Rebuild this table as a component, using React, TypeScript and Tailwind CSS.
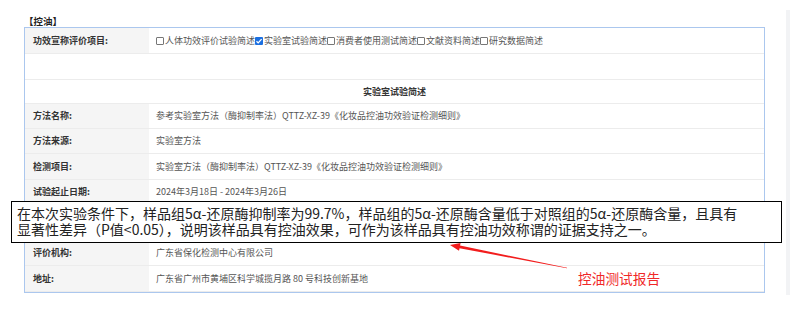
import type { ReactNode } from "react";

const FONT = '"Noto Sans CJK SC", "Noto Sans", sans-serif';

function Box({ checked = false }: { checked?: boolean }) {
  if (checked) {
    return (
      <span className="mr-[1px] inline-flex h-[8px] w-[8px] items-center justify-center rounded-[1px] bg-[#1b6fe0]">
        <svg viewBox="0 0 8 8" className="h-[8px] w-[8px]">
          <path d="M1.5 4.2 L3.2 5.9 L6.6 2.1" fill="none" stroke="#fff" strokeWidth="1.3" />
        </svg>
      </span>
    );
  }
  return <span className="mr-[1px] inline-block h-[8px] w-[8px] rounded-[1px] border border-[#777] bg-white" />;
}

function Row({ label, h, children }: { label?: string; h: string; children?: ReactNode }) {
  return (
    <div className={`flex border-b border-[#ececec] ${h}`}>
      <div className="flex w-[124px] shrink-0 items-center bg-[#f5f5f5] pl-[8px] font-bold text-[#333]">
        {label}
      </div>
      <div className="flex items-center pl-[7px] text-[#555]">{children}</div>
    </div>
  );
}

const items = [
  { text: "人体功效评价试验简述", checked: false },
  { text: "实验室试验简述", checked: true },
  { text: "消费者使用测试简述", checked: false },
  { text: "文献资料简述", checked: false },
  { text: "研究数据简述", checked: false },
];

export default function App() {
  return (
    <div className="relative h-[329px] w-[790px] overflow-hidden bg-white text-[9px]" style={{ fontFamily: FONT }}>
      <div className="absolute right-0 top-[10px] h-[285px] w-[4px] bg-[#f2f3f5]" />

      <div className="pl-[24px] pt-[15px] text-[9.5px] font-bold leading-[12px] text-[#222]">【控油】</div>

      <div className="ml-[24px] w-[741px] border border-[#abc7ee]">
        <Row label="功效宣称评价项目:" h="h-[26px]">
          {items.map((it) => (
            <span key={it.text} className="flex items-center">
              <Box checked={it.checked} />
              {it.text}
            </span>
          ))}
        </Row>
        <div className="h-[26px] border-b border-[#ececec]" />
        <div className="flex h-[24px] items-center justify-center border-b border-[#ececec] font-bold text-[#333]">
          实验室试验简述
        </div>
        <Row label="方法名称:" h="h-[25px]">
          参考实验室方法（酶抑制率法）QTTZ-XZ-39《化妆品控油功效验证检测细则》
        </Row>
        <Row label="方法来源:" h="h-[25px]">实验室方法</Row>
        <Row label="检测项目:" h="h-[26px]">
          实验室方法（酶抑制率法）QTTZ-XZ-39《化妆品控油功效验证检测细则》
        </Row>
        <Row label="试验起止日期:" h="h-[25px]">2024年3月18日 - 2024年3月26日</Row>
        {/* row hidden under the callout box */}
        <Row h="h-[35px]" />
        <Row label="评价机构:" h="h-[26px]">广东省保化检测中心有限公司</Row>
        <Row label="地址:" h="h-[26px]">广东省广州市黄埔区科学城揽月路 80 号科技创新基地</Row>
      </div>

      <div className="absolute left-[11px] top-[201px] h-[42px] w-[771px] border-[1.5px] border-black bg-white pl-[5px] pt-[3px] text-[14px] leading-[16px] text-[#222]">
        <div className="whitespace-nowrap">
          在本次实验条件下，样品组5α-还原酶抑制率为99.7%，样品组的5α-还原酶含量低于对照组的5α-还原酶含量，且具有
        </div>
        <div className="whitespace-nowrap">
          显著性差异（P值&lt;0.05），说明该样品具有控油效果，可作为该样品具有控油功效称谓的证据支持之一。
        </div>
      </div>

      <svg className="pointer-events-none absolute left-0 top-0" width="790" height="329">
        <polygon
          points="450,245 460.6,243 460.05,245.6 567.06,267.7 566.94,268.3 459.55,248.2 459,250.8"
          fill="#f21d1d"
        />
      </svg>

      <div className="absolute left-[578px] top-[269px] text-[13.7px] leading-[18px] text-[#f02828]">控油测试报告</div>
    </div>
  );
}
